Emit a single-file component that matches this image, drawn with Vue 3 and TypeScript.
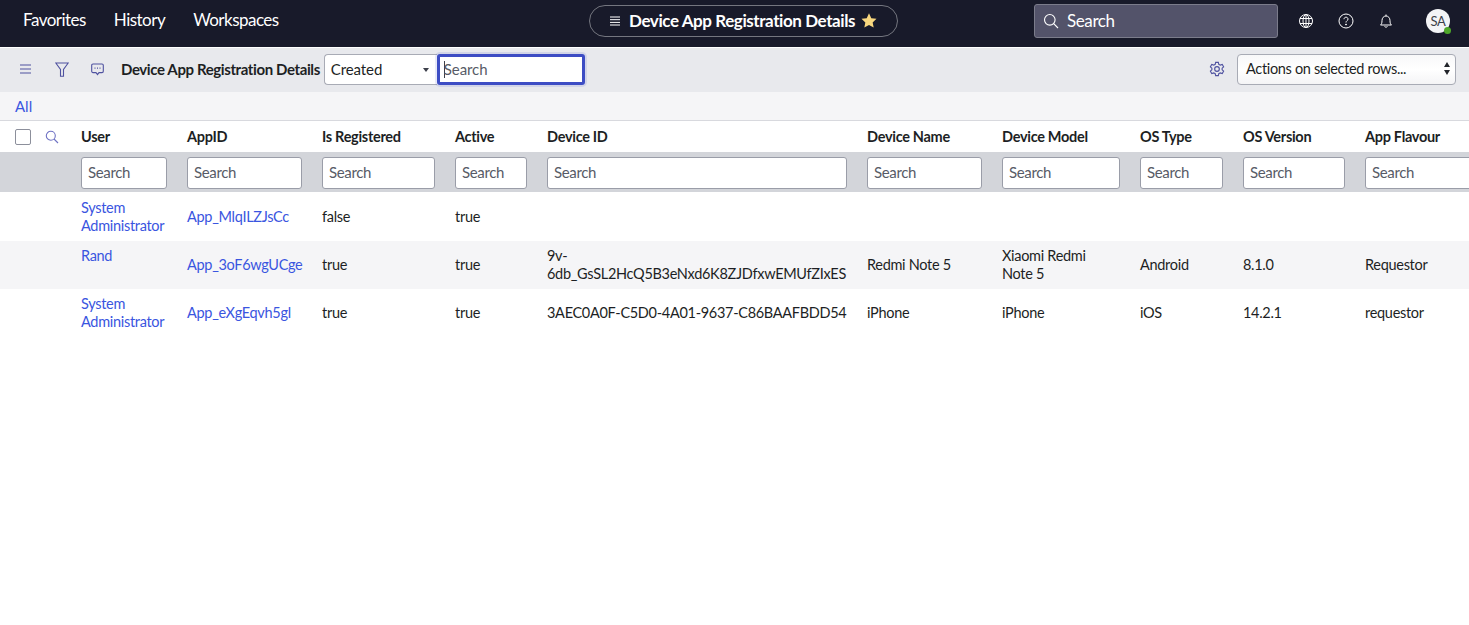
<script setup lang="ts">
interface Column {
  label: string
  key: string
}

interface Row {
  user: string
  appId: string
  registered: string
  active: string
  deviceId?: string
  deviceName?: string
  deviceModel?: string
  osType?: string
  osVersion?: string
  flavour?: string
}

const navItems = ['Favorites', 'History', 'Workspaces']

const columns: Column[] = [
  { label: 'User', key: 'user' },
  { label: 'AppID', key: 'appId' },
  { label: 'Is Registered', key: 'registered' },
  { label: 'Active', key: 'active' },
  { label: 'Device ID', key: 'deviceId' },
  { label: 'Device Name', key: 'deviceName' },
  { label: 'Device Model', key: 'deviceModel' },
  { label: 'OS Type', key: 'osType' },
  { label: 'OS Version', key: 'osVersion' },
  { label: 'App Flavour', key: 'flavour' },
]

const rows: Row[] = [
  { user: 'System Administrator', appId: 'App_MlqILZJsCc', registered: 'false', active: 'true' },
  {
    user: 'Rand',
    appId: 'App_3oF6wgUCge',
    registered: 'true',
    active: 'true',
    deviceId: '9v-6db_GsSL2HcQ5B3eNxd6K8ZJDfxwEMUfZIxES',
    deviceName: 'Redmi Note 5',
    deviceModel: 'Xiaomi Redmi Note 5',
    osType: 'Android',
    osVersion: '8.1.0',
    flavour: 'Requestor',
  },
  {
    user: 'System Administrator',
    appId: 'App_eXgEqvh5gl',
    registered: 'true',
    active: 'true',
    deviceId: '3AEC0A0F-C5D0-4A01-9637-C86BAAFBDD54',
    deviceName: 'iPhone',
    deviceModel: 'iPhone',
    osType: 'iOS',
    osVersion: '14.2.1',
    flavour: 'requestor',
  },
]

function cell(row: Row, key: string): string {
  return (row as unknown as Record<string, string | undefined>)[key] ?? ''
}
</script>

<template>
  <div class="page">
    <header class="topbar">
      <nav class="nav">
        <a v-for="item in navItems" :key="item" class="nav-item">{{ item }}</a>
      </nav>
      <div class="title-pill">
        <svg class="pill-menu" width="12" height="10" viewBox="0 0 12 10" fill="none" stroke="#fff" stroke-width="1">
          <path d="M1 1h10M1 3.700h10M1 6.400h10M1 9h10" />
        </svg>
        <span class="pill-text">Device App Registration Details</span>
        <svg class="pill-star" width="16" height="15" viewBox="0 0 24 23">
          <path fill="#f8d77e" d="M12 0.500l3.500 7.400 8 1-5.900 5.500 1.600 8L12 18.400l-7.200 4 1.600-8L.5 8.900l8-1z" />
        </svg>
      </div>
      <div class="global-search">
        <svg width="16" height="16" viewBox="0 0 16 16" fill="none" stroke="#fff" stroke-width="1.100">
          <circle cx="6.800" cy="6.800" r="5.300" />
          <path d="M10.700 10.700l4.300 4.300" />
        </svg>
        <span>Search</span>
      </div>
      <div class="top-icons">
        <svg width="16" height="16" viewBox="0 0 16 16" fill="none" stroke="#fff" stroke-width="1">
          <circle cx="8" cy="8" r="6.500" />
          <ellipse cx="8" cy="8" rx="3" ry="6.500" />
          <path d="M2 5.500h12M2 10.500h12M8 1.500v13" />
        </svg>
        <svg width="16" height="16" viewBox="0 0 16 16" fill="none" stroke="#fff" stroke-width="1">
          <circle cx="8" cy="8" r="7" />
          <path d="M6 6.200c0-1.200.9-2 2-2s2 .8 2 1.900c0 1.600-2 1.600-2 3.400" />
          <circle cx="8" cy="11.500" r=".5" fill="#fff" />
        </svg>
        <svg width="16" height="16" viewBox="0 0 16 16" fill="none" stroke="#fff" stroke-width="1">
          <path d="M2.500 12h11c-1.200-1-1.500-2-1.500-4.500 0-2.500-1.700-4.500-4-4.500S4 5 4 7.500C4 10 3.700 11 2.500 12z" />
          <path d="M6.500 13.500c.4.800 2.600.8 3 0M8 1.500V3" />
        </svg>
      </div>
      <div class="avatar">
        SA
        <span class="presence"></span>
      </div>
    </header>

    <section class="toolbar">
      <svg class="tool-icon" width="14" height="10" viewBox="0 0 14 10" fill="none" stroke="#4f52a0" stroke-width="1.200">
        <path d="M1 1h11M1 5h11M1 9h11" />
      </svg>
      <svg class="tool-icon filter" width="14" height="15" viewBox="0 0 14 15" fill="none" stroke="#4f52a0" stroke-width="1.100">
        <path d="M.8 1h12.400L8.500 7.500v6.700H5.500V7.500z" />
      </svg>
      <svg class="tool-icon chat" width="13" height="13" viewBox="0 0 13 13" fill="none" stroke="#4f52a0" stroke-width="1.100">
        <path d="M2 1h9a1.300 1.300 0 0 1 1.300 1.300v6A1.300 1.300 0 0 1 11 9.600H8l-1.500 2-1.500-2H2A1.300 1.300 0 0 1 .7 8.300v-6A1.300 1.300 0 0 1 2 1z" />
        <path d="M3.500 5.200h1M6 5.200h1M8.500 5.200h1" stroke-width="1.300" />
      </svg>
      <span class="list-title">Device App Registration Details</span>
      <div class="search-group">
        <div class="field-select">
          <span>Created</span>
          <span class="caret"></span>
        </div>
        <div class="field-search"><span class="cursor"></span>Search</div>
      </div>
      <svg class="gear" width="16" height="16" viewBox="0 0 24 24" fill="none" stroke="#4f52a0" stroke-width="1.700">
        <path d="M10 2h4l.7 3 2.200 1.200 3-1 2 3.500-2.200 2.100v2.400l2.200 2.100-2 3.500-3-1L14.700 19 14 22h-4l-.7-3-2.200-1.200-3 1-2-3.500 2.200-2.100v-2.400L2.100 8.700l2-3.500 3 1L9.300 5z" />
        <circle cx="12" cy="12" r="3.500" />
      </svg>
      <div class="actions-select">
        <span>Actions on selected rows...</span>
        <span class="updown"></span>
      </div>
    </section>

    <div class="breadcrumb"><a class="link">All</a></div>

    <section class="list">
      <div class="grid-row head-row">
        <div class="row-tools">
          <span class="checkbox"></span>
          <svg width="14" height="14" viewBox="0 0 14 14" fill="none" stroke="#6f72c4" stroke-width="1.100">
            <circle cx="5.800" cy="5.800" r="4.500" />
            <path d="M9 9l4 4" />
          </svg>
        </div>
        <div v-for="col in columns" :key="col.key" class="head-cell">{{ col.label }}</div>
      </div>

      <div class="grid-row filter-row">
        <div class="row-tools"></div>
        <div v-for="col in columns" :key="col.key" class="filter-input">Search</div>
      </div>

      <div v-for="(row, i) in rows" :key="row.appId" class="grid-row data-row" :class="{ odd: i % 2 === 1, tall: i === 0 }">
        <div class="row-tools"></div>
        <div
          v-for="col in columns"
          :key="col.key"
          class="data-cell"
          :class="{
            'user-cell': col.key === 'user',
            'device-cell': col.key === 'deviceId',
            'model-cell': col.key === 'deviceModel',
          }"
        >
          <a v-if="col.key === 'user' || col.key === 'appId'" class="link">{{ cell(row, col.key) }}</a>
          <template v-else>{{ cell(row, col.key) }}</template>
        </div>
      </div>
    </section>
  </div>
</template>

<style>
html,
body {
  margin: 0;
  background: #fff;
  overflow: hidden;
}
</style>

<style scoped>
.page {
  width: 1469px;
  height: 625px;
  overflow: hidden;
  font-family: Lato, "Liberation Sans", sans-serif;
  font-size: 14.500px;
  letter-spacing: -0.3px;
  color: #1d1f24;
}

.topbar {
  display: flex;
  align-items: center;
  height: 47px;
  box-sizing: border-box;
  padding: 0 0 6px 23px;
  background: #181a2a;
  color: #fff;
}

.nav {
  display: flex;
  gap: 28px;
  width: 566px;
  margin-top: -2px;
  font-size: 17px;
  letter-spacing: -0.52px;
}

.title-pill {
  display: flex;
  align-items: center;
  width: 309px;
  height: 32px;
  box-sizing: border-box;
  padding-left: 19px;
  border: 1px solid #74767f;
  border-radius: 16px;
  font-size: 17px;
  font-weight: 700;
  letter-spacing: -0.42px;
}

.pill-text {
  margin-top: -1px;
  margin-left: 8px;
}

.pill-star {
  margin-left: 6px;
}

.global-search {
  display: flex;
  align-items: center;
  gap: 8px;
  width: 244px;
  height: 34px;
  box-sizing: border-box;
  margin-left: 136px;
  padding-left: 8px;
  background: #53536a;
  border: 1px solid #7b7c8b;
  border-radius: 3px;
  font-size: 17px;
  letter-spacing: -0.4px;
}

.top-icons {
  display: flex;
  gap: 24px;
  margin-left: 20px;
}

.avatar {
  position: relative;
  display: flex;
  align-items: center;
  justify-content: center;
  width: 24px;
  height: 24px;
  margin-left: 32px;
  border-radius: 50%;
  background: #f3f4f6;
  color: #3c3f4a;
  font-size: 13px;
}

.presence {
  position: absolute;
  right: -1px;
  bottom: -1px;
  width: 7px;
  height: 7px;
  border-radius: 50%;
  background: #4fa82a;
}

.toolbar {
  display: flex;
  align-items: center;
  height: 44px;
  box-sizing: border-box;
  margin-top: 1px;
  padding: 0 13px 2px 19px;
  background: #e8e9ed;
}

.tool-icon {
  flex: none;
}

.filter {
  margin-left: 22px;
}

.chat {
  margin-left: 22px;
}

.list-title {
  margin-left: 17px;
  font-size: 15px;
  font-weight: 700;
  letter-spacing: -0.39px;
  color: #1d1f24;
  white-space: nowrap;
}

.search-group {
  display: flex;
  margin-left: 4px;
  font-size: 15px;
  letter-spacing: -0.1px;
}

.field-select {
  display: flex;
  align-items: center;
  justify-content: space-between;
  width: 113px;
  height: 31px;
  box-sizing: border-box;
  padding: 0 8px 0 6px;
  background: #fff;
  border: 1px solid #a8abb5;
  border-right: 0;
  border-radius: 4px 0 0 4px;
}

.caret {
  width: 0;
  height: 0;
  margin-top: 2px;
  border: 3px solid transparent;
  border-top: 4px solid #3c3f4a;
  border-bottom: 0;
}

.field-search {
  display: flex;
  align-items: center;
  width: 148px;
  height: 31px;
  box-sizing: border-box;
  padding-left: 4px;
  background: #fff;
  border: 3px solid #3d4dc4;
  border-radius: 3px;
  box-shadow: 0 0 0 2px rgba(61, 77, 196, 0.12);
  color: #575b66;
}

.cursor {
  width: 1px;
  height: 17px;
  margin-right: -1px;
  background: #3c3f4a;
}

.gear {
  margin-left: auto;
}

.actions-select {
  display: flex;
  align-items: center;
  justify-content: space-between;
  width: 219px;
  height: 31px;
  box-sizing: border-box;
  margin-left: 12px;
  padding: 0 5px 1px 8px;
  background: linear-gradient(#f8f8f9, #fff 50%, #f4f4f6);
  border: 1px solid #a8abb5;
  border-radius: 4px;
  font-size: 14.500px;
  letter-spacing: -0.33px;
}

.updown {
  position: relative;
  width: 6px;
  height: 11px;
}

.updown::before,
.updown::after {
  content: "";
  position: absolute;
  left: 0;
  border: 3px solid transparent;
}

.updown::before {
  top: -1px;
  border-top: 0;
  border-bottom: 5px solid #22242a;
}

.updown::after {
  bottom: -1px;
  border-bottom: 0;
  border-top: 5px solid #22242a;
}

.breadcrumb {
  display: flex;
  align-items: center;
  height: 28px;
  padding-left: 15px;
  background: #f5f5f7;
  border-bottom: 1px solid #d8d9de;
  font-size: 15px;
  letter-spacing: 0;
}

.link {
  color: #3a55e0;
}

.grid-row {
  display: grid;
  grid-template-columns: 61px 86px 115px 113px 72px 300px 115px 118px 83px 102px 120px;
  column-gap: 20px;
  align-items: center;
}

.row-tools {
  display: flex;
  align-items: center;
  gap: 14px;
  padding-left: 15px;
}

.checkbox {
  width: 14px;
  height: 14px;
  background: #fff;
  border: 1px solid #8c8f9b;
  border-radius: 2px;
}

.head-row {
  height: 31px;
}

.head-cell {
  font-weight: 700;
  white-space: nowrap;
}

.filter-row {
  height: 40px;
  padding-top: 2px;
  box-sizing: border-box;
  background: #d3d5da;
}

.filter-input {
  display: flex;
  align-items: center;
  height: 32px;
  box-sizing: border-box;
  padding: 0 0 2px 6px;
  background: #fff;
  border: 1px solid #9a9da8;
  border-radius: 3px;
  color: #575b66;
  font-size: 15px;
  letter-spacing: -0.35px;
}

.data-row {
  height: 48px;
  line-height: 18px;
}

.data-row.tall {
  height: 49px;
}

.data-row.odd {
  background: #f5f5f7;
}

.user-cell {
  align-self: start;
  padding-top: 6px;
}

.tall .user-cell {
  padding-top: 7px;
}

.device-cell {
  letter-spacing: -0.3px;
}

.model-cell {
  padding-right: 16px;
}
</style>
